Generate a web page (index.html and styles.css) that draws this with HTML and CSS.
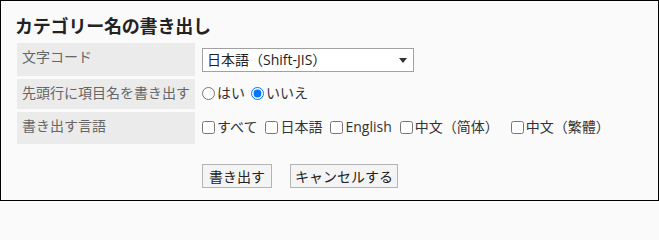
FILE: index.html
```html
<!DOCTYPE html>
<html lang="ja">
<head>
<meta charset="utf-8">
<link rel="stylesheet" href="styles.css">
</head>
<body>
<div class="frame">
  <h1 class="title">カテゴリー名の書き出し</h1>
  <div class="form">
    <div class="label row1">文字コード</div>
    <div class="value row1">
      <div class="select-wrap">
        <select class="select">
          <option>日本語（Shift-JIS）</option>
        </select>
      </div>
    </div>
    <div class="label row2">先頭行に項目名を書き出す</div>
    <div class="value row2 inline">
      <label class="opt"><input type="radio" name="hdr" class="radio">はい</label>
      <label class="opt"><input type="radio" name="hdr" class="radio" checked>いいえ</label>
    </div>
    <div class="label row3">書き出す言語</div>
    <div class="value row3 inline">
      <label class="opt"><input type="checkbox" class="check">すべて</label>
      <label class="opt"><input type="checkbox" class="check">日本語</label>
      <label class="opt"><input type="checkbox" class="check">English</label>
      <label class="opt wide"><input type="checkbox" class="check">中文（简体）</label>
      <label class="opt"><input type="checkbox" class="check">中文（繁體）</label>
    </div>
  </div>
  <div class="actions">
    <button class="btn">書き出す</button>
    <button class="btn">キャンセルする</button>
  </div>
</div>
</body>
</html>
```

FILE: styles.css
```css
html, body {
  margin: 0;
  padding: 0;
  background: #fafafa;
}
.frame {
  box-sizing: border-box;
  width: 659px;
  height: 201px;
  border: 1px solid #000;
  background: #fafafa;
  font-family: "Open Sans", "Noto Sans CJK JP", sans-serif;
  font-size: 14px;
  color: #333;
}
.title {
  margin: 12px 0 0 14px;
  font-family: "Noto Sans CJK JP", sans-serif;
  font-size: 18px;
  line-height: 24px;
  font-weight: bold;
  color: #222;
  letter-spacing: -0.2px;
}
.form {
  display: grid;
  grid-template-columns: 178px 1fr;
  grid-template-rows: 33px 30px 32px;
  column-gap: 3px;
  row-gap: 3px;
  margin: 6px 0 0 16px;
}
.label {
  background: #ebebeb;
  color: #666;
  padding: 4px 5px 3px;
  line-height: 20px;
}
.value {
  padding: 0 0 0 4px;
  line-height: 20px;
}
.row1.value {
  padding-top: 5px;
}
.inline {
  display: flex;
  align-items: center;
  align-self: start;
  color: #333;
}
.row2.inline {
  padding-top: 4px;
}
.row3.inline {
  padding-top: 5px;
}
.select-wrap {
  position: relative;
  width: 212px;
}
.select {
  appearance: none;
  -webkit-appearance: none;
  box-sizing: border-box;
  width: 212px;
  height: 24px;
  border: 1px solid #a0a0a0;
  border-radius: 0;
  background: #fff;
  font-family: inherit;
  font-size: 14px;
  color: #222;
  padding: 0 0 0 4px;
  line-height: 20px;
}
.select-wrap::after {
  content: "";
  position: absolute;
  right: 7px;
  top: 10px;
  border-left: 4px solid transparent;
  border-right: 4px solid transparent;
  border-top: 5px solid #333;
}
.opt {
  display: inline-flex;
  align-items: center;
  white-space: nowrap;
}
.row2 .opt {
  margin-right: 6px;
}
.row3 .opt {
  margin-right: 8px;
}
.row3 .opt.wide {
  margin-right: 12px;
}
.radio {
  margin: 0 2px 0 0;
  width: 13px;
  height: 13px;
}
.check {
  margin: 0 2px 0 0;
  width: 13px;
  height: 13px;
}
.actions {
  display: flex;
  gap: 18px;
  margin: 20px 0 0 201px;
}
.btn {
  box-sizing: border-box;
  height: 24px;
  min-width: 70px;
  padding: 0 4px;
  border: 1px solid #b4b4b4;
  border-radius: 0;
  background: #f4f4f4;
  font-family: "Noto Sans CJK JP", sans-serif;
  font-size: 14px;
  color: #222;
  line-height: 20px;
}
```
